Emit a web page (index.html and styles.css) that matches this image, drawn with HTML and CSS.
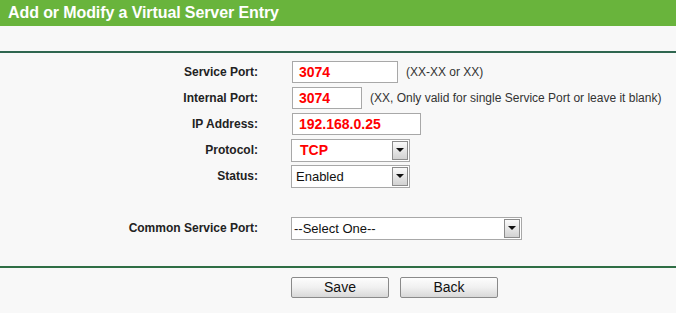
FILE: index.html
```html
<!DOCTYPE html>
<html>
<head>
<meta charset="utf-8">
<link rel="stylesheet" href="styles.css">
</head>
<body>
<div class="title">Add or Modify a Virtual Server Entry</div>
<div class="spacer-top"></div>
<div class="rule"></div>
<div class="form">
  <div class="label">Service Port:</div>
  <div class="field"><span class="input w-service">3074</span><span class="hint">(XX-XX or XX)</span></div>
  <div class="label">Internal Port:</div>
  <div class="field"><span class="input w-internal">3074</span><span class="hint">(XX, Only valid for single Service Port or leave it blank)</span></div>
  <div class="label">IP Address:</div>
  <div class="field"><span class="input w-ip">192.168.0.25</span></div>
  <div class="label">Protocol:</div>
  <div class="field"><span class="select w-proto"><span class="value red">TCP</span><span class="arrow"><span class="tri"></span></span></span></div>
  <div class="label">Status:</div>
  <div class="field"><span class="select w-proto"><span class="value">Enabled</span><span class="arrow"><span class="tri"></span></span></span></div>
  <div class="label"></div>
  <div class="field"></div>
  <div class="label">Common Service Port:</div>
  <div class="field"><span class="select w-common"><span class="value plain">--Select One--</span><span class="arrow"><span class="tri"></span></span></span></div>
</div>
<div class="rule rule-bottom"></div>
<div class="buttons">
  <span class="btn">Save</span>
  <span class="btn">Back</span>
</div>
</body>
</html>
```
FILE: styles.css
```css
html, body {
  margin: 0;
  padding: 0;
  background: #f8f8f8;
  font-family: "Liberation Sans", Arial, sans-serif;
  color: #222;
}
.title {
  height: 26px;
  line-height: 26px;
  background: #69b43c;
  color: #fff;
  font-weight: bold;
  font-size: 16px;
  letter-spacing: -0.1px;
  padding-left: 8px;
}
.spacer-top {
  height: 25px;
}
.rule {
  height: 2px;
  background: #2f6650;
}
.form {
  display: grid;
  grid-template-columns: 258px 1fr;
  grid-auto-rows: 26px;
  column-gap: 33px;
  padding-top: 6px;
  align-items: center;
}
.label {
  text-align: right;
  font-weight: bold;
  font-size: 12px;
  color: #222;
}
.field {
  display: flex;
  align-items: center;
}
.input {
  box-sizing: border-box;
  height: 22px;
  margin-left: 1px;
  border: 1px solid #a8a8a8;
  background: #fff;
  color: #ff0000;
  font-weight: bold;
  font-size: 14px;
  line-height: 20px;
  padding-left: 6px;
}
.w-service { width: 106px; }
.w-internal { width: 70px; }
.w-ip { width: 129px; }
.hint {
  font-size: 12px;
  color: #333;
  margin-left: 8px;
}
.select {
  box-sizing: border-box;
  display: flex;
  align-items: center;
  height: 23px;
  border: 1px solid #a8a8a8;
  background: #fff;
  padding-right: 1px;
}
.w-proto { width: 119px; }
.w-common { width: 231px; }
.value {
  flex: 1;
  font-size: 13px;
  color: #111;
  padding-left: 4px;
}
.value.red {
  color: #ff0000;
  font-weight: bold;
  font-size: 14px;
  padding-left: 8px;
}
.value.plain {
  padding-left: 2px;
}
.arrow {
  box-sizing: border-box;
  width: 16px;
  height: 19px;
  border: 1px solid #8c8c8c;
  background: linear-gradient(#fafafa, #d2d2d2);
  display: flex;
  align-items: center;
  justify-content: center;
}
.tri {
  width: 0;
  height: 0;
  border-left: 4px solid transparent;
  border-right: 4px solid transparent;
  border-top: 4px solid #111;
}
.rule-bottom {
  margin-top: 25px;
  background: #2f6e45;
}
.buttons {
  display: flex;
  gap: 11px;
  padding-left: 291px;
  padding-top: 9px;
}
.btn {
  box-sizing: border-box;
  width: 98px;
  height: 21px;
  border: 1px solid #8a8a8a;
  border-radius: 2px;
  background: linear-gradient(#fdfdfd, #f0f0f0 50%, #d8d8d8);
  font-size: 14px;
  line-height: 19px;
  text-align: center;
  color: #111;
}
```
